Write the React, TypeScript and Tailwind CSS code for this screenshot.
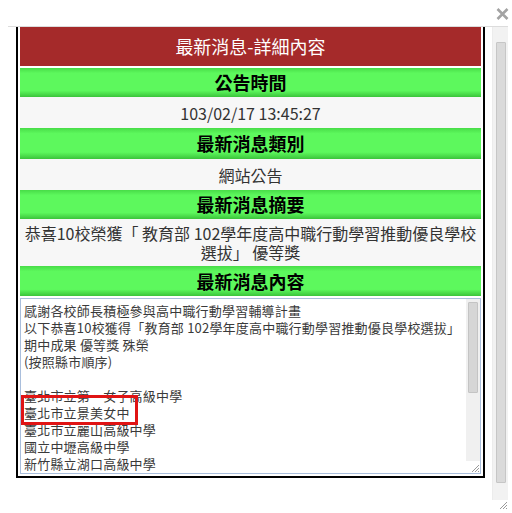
const lines = [
  '感謝各校師長積極參與高中職行動學習輔導計畫',
  '以下恭喜10校獲得「教育部 102學年度高中職行動學習推動優良學校選拔」',
  '期中成果 優等獎 殊榮',
  '(按照縣市順序)',
  '',
  '臺北市立第一女子高級中學',
  '臺北市立景美女中',
  '臺北市立麗山高級中學',
  '國立中壢高級中學',
  '新竹縣立湖口高級中學',
];

const GreenHead = ({ text, h }: { text: string; h: string }) => (
  <div
    className={`${h} flex items-center justify-center bg-[linear-gradient(to_bottom,#48dc48,#5df85d_18%,#5df85d_78%,#3bc43b)] text-[18px] font-bold text-black`}
  >
    {text}
  </div>
);

const Grip = () => (
  <svg width="10" height="10" viewBox="0 0 10 10">
    <path d="M9 2L2 9M9 5L5 9M9 8L8 9" stroke="#9a9a9a" strokeWidth="1" />
  </svg>
);

export default function App() {
  return (
    <div className="relative h-[513px] w-[512px] overflow-hidden bg-white font-[Noto_Sans_CJK_TC,sans-serif] text-[#333]">
      {/* top bar with close */}
      <div className="flex h-[26px] justify-end pr-[3px] pt-[8px]">
        <svg width="13" height="12" viewBox="0 0 13 12">
          <path d="M1.5 1L11.5 11M11.5 1L1.5 11" stroke="#a3a3a3" strokeWidth="2.6" />
        </svg>
      </div>

      <div className="ml-[8px] flex h-[474px] w-[500px] border-t border-[#dcdcdc]">
        <div className="w-[484px] overflow-hidden pl-[8px]">
          <div className="w-[469px] border-x-2 border-b-2 border-black px-[2px] pb-[2px]">
            <div className="flex h-[39px] items-center justify-center bg-[#a52a2a] text-[18px] text-white">
              最新消息-詳細內容
            </div>
            <div className="mt-[2px]">
              <GreenHead text="公告時間" h="h-[29px]" />
              <div className="flex h-[31px] items-center justify-center bg-[#f7f7f7] text-[16px]">
                103/02/17 13:45:27
              </div>
              <GreenHead text="最新消息類別" h="h-[31px]" />
              <div className="flex h-[31px] items-center justify-center bg-[#f7f7f7] text-[16px]">
                網站公告
              </div>
              <GreenHead text="最新消息摘要" h="h-[29px]" />
              <div className="flex h-[47px] items-center justify-center bg-[#f7f7f7] px-1 text-center text-[16px] leading-[19px]">
                恭喜10校榮獲「 教育部 102學年度高中職行動學習推動優良學校選拔」 優等獎
              </div>
              <GreenHead text="最新消息內容" h="h-[30px]" />
            </div>

            {/* textarea */}
            <div className="mt-[2px] flex h-[176px] border border-[#a9bedc] bg-white">
              <div className="flex-1 overflow-hidden px-[3px] pt-[3px] text-[13px] leading-[17px] tracking-[0.2px] text-[#3a3a3a]">
                {lines.map((l, i) => (
                  <div key={i} className="h-[17px] whitespace-pre">
                    {l}
                  </div>
                ))}
              </div>
              <div className="flex w-[14px] flex-col bg-[#f0f0f0]">
                <div className="mx-auto mt-[3px] h-[91px] w-[10px] rounded-[1px] border border-[#c4c4c4] bg-[#d6d6d6]" />
                <div className="flex-1" />
                <div className="flex h-[12px] items-end justify-end bg-white">
                  <Grip />
                </div>
              </div>
            </div>
          </div>
        </div>

        {/* outer scrollbar */}
        <div className="flex w-[16px] flex-col border-l border-[#ececec] bg-[#f2f2f2]">
          <div className="mx-auto mt-[15px] h-[441px] w-[10px] rounded-[1px] border border-[#c6c6c6] bg-[#dadada]" />
        </div>
      </div>

      <div className="absolute bottom-[3px] right-[4px]">
        <Grip />
      </div>

      {/* highlight box */}
      <div className="absolute left-[21px] top-[395px] h-[30px] w-[117px] border-[3px] border-[#e01414]" />
    </div>
  );
}
